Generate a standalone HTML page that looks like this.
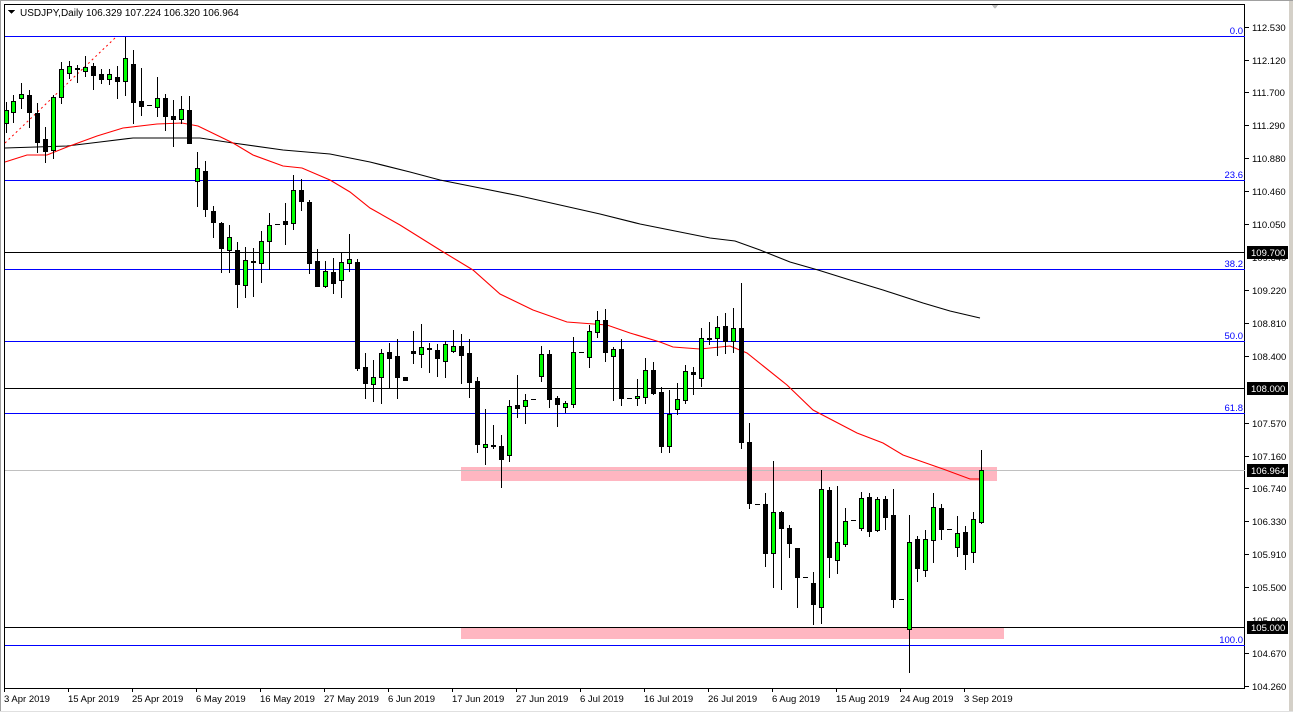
<!DOCTYPE html>
<html><head><meta charset="utf-8"><style>
html,body{margin:0;padding:0;background:#fff;}
body{width:1293px;height:712px;overflow:hidden;position:relative;font-family:"Liberation Sans","DejaVu Sans",sans-serif;}
svg{position:absolute;left:0;top:0;}
text{font-family:"Liberation Sans","DejaVu Sans",sans-serif;}
</style></head><body>
<svg id="s" width="1293" height="712" viewBox="0 0 1293 712" xmlns="http://www.w3.org/2000/svg" shape-rendering="crispEdges">
<rect x="0" y="0" width="1293" height="712" fill="#fff"/>
<rect x="1289" y="0" width="4" height="712" fill="#d4d0c8"/>
<line x1="0" y1="0.5" x2="1293" y2="0.5" stroke="#a0a0a0"/>
<line x1="0.5" y1="0" x2="0.5" y2="712" stroke="#a0a0a0"/>
<line x1="0" y1="711.5" x2="1293" y2="711.5" stroke="#e0e0e0"/>
<polygon points="991,4 999,4 995,9" fill="#c0c0c0"/>
<!-- plot frame -->
<rect x="4.5" y="4.5" width="1240" height="684" fill="none" stroke="#000"/>
<!-- horizontal levels -->
<g stroke-width="1">
<line x1="5" y1="36.5" x2="1245" y2="36.5" stroke="#0000ff"/>
<line x1="5" y1="180.5" x2="1245" y2="180.5" stroke="#0000ff"/>
<line x1="5" y1="252.5" x2="1245" y2="252.5" stroke="#000"/>
<line x1="5" y1="269.5" x2="1245" y2="269.5" stroke="#0000ff"/>
<line x1="5" y1="341.5" x2="1245" y2="341.5" stroke="#0000ff"/>
<line x1="5" y1="388.5" x2="1245" y2="388.5" stroke="#000"/>
<line x1="5" y1="413.5" x2="1245" y2="413.5" stroke="#0000ff"/>
<line x1="5" y1="645.5" x2="1245" y2="645.5" stroke="#0000ff"/>
</g>
<rect x="461" y="467" width="536" height="14" fill="#ffb6c1"/>
<line x1="5" y1="470.5" x2="1245" y2="470.5" stroke="#c0c0c0"/>
<rect x="461" y="627" width="543" height="12" fill="#ffb6c1"/>
<line x1="5" y1="627.5" x2="1245" y2="627.5" stroke="#000"/>
<!-- fib labels -->
<g fill="#0000ff" font-size="9.5" text-anchor="end">
<text x="1243" y="34">0.0</text>
<text x="1243" y="178">23.6</text>
<text x="1243" y="267">38.2</text>
<text x="1243" y="339">50.0</text>
<text x="1243" y="411">61.8</text>
<text x="1243" y="643">100.0</text>
</g>
<!-- dashed fib trend -->
<line x1="5" y1="143" x2="115" y2="38" stroke="#ff0000" stroke-dasharray="2,3" shape-rendering="auto"/>
<g id="mas" fill="none" shape-rendering="auto" stroke-width="1.1">
<polyline stroke="#000" points="5,148 67,146 100,142 133,138 177,138 200,138 233,143 283,150 330,154 370,162 410,172 440,180 480,188 520,196 560,205 600,214 640,224 680,232 710,238 735,241 760,250 790,262 818,270 850,280 883,290 923,303 950,311 980,318"/>
<polyline stroke="#ff0000" points="5,162 27,155 47,155 67,147 97,136 123,128 157,124 182,123 198,126 233,143 253,155 283,166 302,168 330,180 350,192 370,208 400,225 440,250 473,270 500,294 533,310 567,322 607,325 630,333 660,342 673,347 700,349 720,347 730,346 747,353 787,385 813,410 857,433 883,443 903,455 943,469 970,479 980,479"/>
</g>
<g id="candles"></g>
<!-- right axis -->
<g font-size="9.5" fill="#000" id="axis">
<text x="1252" y="31">112.530</text>
<text x="1252" y="64">112.120</text>
<text x="1252" y="96">111.700</text>
<text x="1252" y="129">111.290</text>
<text x="1252" y="162">110.880</text>
<text x="1252" y="195">110.460</text>
<text x="1252" y="228">110.050</text>
<text x="1252" y="261">109.640</text>
<text x="1252" y="294">109.220</text>
<text x="1252" y="327">108.810</text>
<text x="1252" y="360">108.400</text>
<text x="1252" y="427">107.570</text>
<text x="1252" y="460">107.160</text>
<text x="1252" y="492">106.740</text>
<text x="1252" y="525">106.330</text>
<text x="1252" y="558">105.910</text>
<text x="1252" y="591">105.500</text>
<text x="1252" y="624">105.090</text>
<text x="1252" y="657">104.670</text>
<text x="1252" y="690">104.260</text>
</g>
<g stroke="#000">
<line x1="1245" y1="27.5" x2="1249" y2="27.5"/><line x1="1245" y1="60.5" x2="1249" y2="60.5"/><line x1="1245" y1="92.5" x2="1249" y2="92.5"/><line x1="1245" y1="125.5" x2="1249" y2="125.5"/><line x1="1245" y1="158.5" x2="1249" y2="158.5"/><line x1="1245" y1="191.5" x2="1249" y2="191.5"/><line x1="1245" y1="224.5" x2="1249" y2="224.5"/><line x1="1245" y1="290.5" x2="1249" y2="290.5"/><line x1="1245" y1="323.5" x2="1249" y2="323.5"/><line x1="1245" y1="356.5" x2="1249" y2="356.5"/><line x1="1245" y1="423.5" x2="1249" y2="423.5"/><line x1="1245" y1="456.5" x2="1249" y2="456.5"/><line x1="1245" y1="488.5" x2="1249" y2="488.5"/><line x1="1245" y1="521.5" x2="1249" y2="521.5"/><line x1="1245" y1="554.5" x2="1249" y2="554.5"/><line x1="1245" y1="587.5" x2="1249" y2="587.5"/><line x1="1245" y1="653.5" x2="1249" y2="653.5"/><line x1="1245" y1="686.5" x2="1249" y2="686.5"/>
</g>
<g font-size="9.5">
<rect x="1247" y="246" width="41" height="13" fill="#000"/><text x="1251" y="256" fill="#fff">109.700</text>
<rect x="1247" y="382" width="41" height="13" fill="#000"/><text x="1251" y="392" fill="#fff">108.000</text>
<rect x="1247" y="464" width="41" height="13" fill="#000"/><text x="1251" y="474" fill="#fff">106.964</text>
<rect x="1247" y="621" width="41" height="13" fill="#000"/><text x="1251" y="631" fill="#fff">105.000</text>
</g>
<!-- bottom axis -->
<g font-size="9.5" fill="#000">
<text x="4" y="702">3 Apr 2019</text>
<text x="68" y="702">15 Apr 2019</text>
<text x="132" y="702">25 Apr 2019</text>
<text x="196" y="702">6 May 2019</text>
<text x="260" y="702">16 May 2019</text>
<text x="324" y="702">27 May 2019</text>
<text x="388" y="702">6 Jun 2019</text>
<text x="452" y="702">17 Jun 2019</text>
<text x="516" y="702">27 Jun 2019</text>
<text x="580" y="702">6 Jul 2019</text>
<text x="644" y="702">16 Jul 2019</text>
<text x="708" y="702">26 Jul 2019</text>
<text x="772" y="702">6 Aug 2019</text>
<text x="836" y="702">15 Aug 2019</text>
<text x="900" y="702">24 Aug 2019</text>
<text x="964" y="702">3 Sep 2019</text>
</g>
<g stroke="#000">
<line x1="4.5" y1="688" x2="4.5" y2="692"/><line x1="68.5" y1="688" x2="68.5" y2="692"/><line x1="132.5" y1="688" x2="132.5" y2="692"/><line x1="196.5" y1="688" x2="196.5" y2="692"/><line x1="260.5" y1="688" x2="260.5" y2="692"/><line x1="324.5" y1="688" x2="324.5" y2="692"/><line x1="388.5" y1="688" x2="388.5" y2="692"/><line x1="452.5" y1="688" x2="452.5" y2="692"/><line x1="516.5" y1="688" x2="516.5" y2="692"/><line x1="580.5" y1="688" x2="580.5" y2="692"/><line x1="644.5" y1="688" x2="644.5" y2="692"/><line x1="708.5" y1="688" x2="708.5" y2="692"/><line x1="772.5" y1="688" x2="772.5" y2="692"/><line x1="836.5" y1="688" x2="836.5" y2="692"/><line x1="900.5" y1="688" x2="900.5" y2="692"/><line x1="964.5" y1="688" x2="964.5" y2="692"/>
</g>
<!-- title -->
<polygon points="8,10 15,10 11.5,14" fill="#000"/>
<text x="20" y="16" font-size="10" fill="#000">USDJPY,Daily  106.329 107.224 106.320 106.964</text>
</svg>
<script>
// x, wickTop, wickBot, bodyTop, bodyBot, bull(1)/bear(0)
var C=[
[6,102,132,110,123,1],[13,95,122,101,112,1],[21,83,108,94,98,1],[29,90,127,95,112,0],[37,103,152,113,142,0],
[45,127,162,139,151,0],[53,95,158,97,150,1],[61,62,103,69,97,1],[69,61,78,66,73,1],[77,65,82,68,69,0],
[85,56,76,67,71,1],[93,63,89,66,75,0],[101,69,83,74,79,0],[109,69,84,74,79,1],[117,66,98,77,81,0],
[125,37,95,58,81,1],[133,50,123,64,102,0],[141,68,115,101,106,0],[149,105,105,105,106,0],[157,77,116,98,107,1],
[165,94,130,98,116,0],[173,100,146,116,119,0],[181,96,123,109,119,1],[189,96,143,110,143,0],[197,152,206,168,181,1],
[205,161,216,171,209,0],[213,206,237,211,222,0],[221,222,272,223,248,0],[229,225,272,237,250,1],[237,242,307,250,284,0],
[245,247,297,260,285,1],[253,248,296,261,262,0],[261,231,282,241,263,1],[269,213,269,225,241,1],[277,224,224,224,225,0],
[285,203,244,221,224,0],[293,175,229,190,223,1],[301,179,210,190,201,0],[309,200,273,202,263,0],[317,249,286,261,286,0],
[325,261,287,271,286,1],[333,258,293,272,283,0],[341,253,297,262,280,1],[349,234,271,259,263,1],[357,259,370,262,368,0],
[365,353,398,367,383,0],[373,360,401,377,384,1],[381,349,403,353,377,1],[389,343,387,352,358,0],[397,339,398,356,377,0],
[405,377,380,377,380,0],[413,331,363,351,353,0],[421,324,367,347,354,1],[429,343,372,348,349,0],[437,344,376,350,358,0],
[445,341,377,344,361,1],[453,330,352,346,351,1],[461,334,383,346,355,0],[469,339,397,353,382,0],[477,377,452,381,444,0],
[485,409,464,444,447,1],[493,425,448,445,446,0],[501,435,487,446,459,0],[509,400,461,406,455,1],[517,375,417,405,408,0],
[525,394,423,400,406,1],[533,399,399,399,400,0],[541,346,381,354,376,1],[549,350,407,354,399,0],[557,396,426,398,404,0],
[565,401,412,403,407,1],[573,337,407,352,404,1],[581,352,352,352,353,0],[589,325,367,331,357,1],[597,311,337,320,332,1],
[605,309,361,320,352,0],[613,347,400,349,356,1],[621,339,405,349,398,0],[629,398,398,398,399,0],[637,379,405,396,398,1],
[645,358,403,370,397,1],[653,362,394,370,393,0],[661,387,452,392,446,0],[669,390,452,414,446,1],[677,383,414,399,409,1],
[685,365,403,371,400,1],[693,367,394,372,374,0],[701,328,386,338,378,1],[709,322,344,338,339,0],[717,316,355,327,338,1],
[725,313,353,326,341,0],[733,308,352,328,341,1],[741,283,448,328,442,0],[749,423,508,442,503,0],[757,504,504,504,505,0],
[765,493,566,504,553,0],[773,461,587,512,553,1],[781,511,589,512,528,0],[789,525,557,528,543,0],[797,548,607,548,577,0],
[805,577,577,577,578,0],[813,572,624,583,604,0],[821,470,623,489,607,1],[829,487,577,490,557,0],[837,486,573,542,560,1],
[845,508,546,521,544,1],[853,520,520,520,521,0],[861,492,530,498,528,1],[869,493,536,497,531,0],[877,497,531,499,530,1],
[885,496,529,499,517,0],[893,489,607,515,599,0],[901,599,599,599,600,0],[909,515,672,542,629,1],[917,536,581,539,568,0],
[925,530,576,539,570,1],[933,493,562,507,540,1],[941,504,539,508,529,0],[949,529,529,529,530,0],[957,516,556,533,547,1],
[965,526,569,532,554,0],[973,512,562,519,552,1],[981,450,523,470,522,1]
];
var g=document.getElementById('candles'),ns='http://www.w3.org/2000/svg',h='';
C.forEach(function(c){
 var x=c[0];
 h+='<line x1="'+(x+0.5)+'" y1="'+c[1]+'" x2="'+(x+0.5)+'" y2="'+(c[2]+1)+'" stroke="#000"/>';
 var bh=Math.max(1,c[4]-c[3]);
 if(c[1]===c[2]){h+='<rect x="'+(x-2)+'" y="'+c[3]+'" width="5" height="1" fill="#000"/>';return;}
 if(c[5]) h+='<rect x="'+(x-2)+'.5" y="'+c[3]+'.5" width="4" height="'+bh+'" fill="#00ff00" stroke="#000"/>';
 else h+='<rect x="'+(x-2)+'" y="'+c[3]+'" width="5" height="'+(bh+1)+'" fill="#000"/>';
});
g.innerHTML=h;
</script>
</body></html>
